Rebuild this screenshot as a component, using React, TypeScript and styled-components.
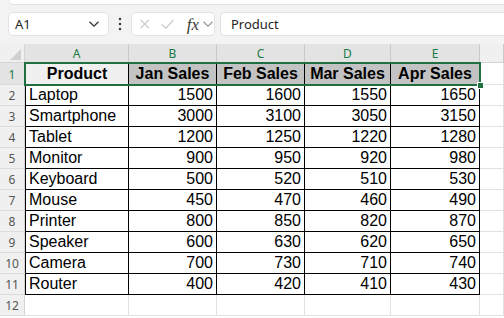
import React from "react";
import styled, { createGlobalStyle } from "styled-components";

const GlobalStyle = createGlobalStyle`
  html, body {
    margin: 0;
    padding: 0;
    background: #f3f3f3;
  }
`;

const COLS = [
  { key: "A", width: 104 },
  { key: "B", width: 88 },
  { key: "C", width: 88 },
  { key: "D", width: 86 },
  { key: "E", width: 89 },
];

const DATA: [string, number, number, number, number][] = [
  ["Laptop", 1500, 1600, 1550, 1650],
  ["Smartphone", 3000, 3100, 3050, 3150],
  ["Tablet", 1200, 1250, 1220, 1280],
  ["Monitor", 900, 950, 920, 980],
  ["Keyboard", 500, 520, 510, 530],
  ["Mouse", 450, 470, 460, 490],
  ["Printer", 800, 850, 820, 870],
  ["Speaker", 600, 630, 620, 650],
  ["Camera", 700, 730, 710, 740],
  ["Router", 400, 420, 410, 430],
];

const HEADERS = ["Product", "Jan Sales", "Feb Sales", "Mar Sales", "Apr Sales"];

const Window = styled.div`
  width: 504px;
  height: 318px;
  overflow: hidden;
  background: #f3f3f3;
  display: flex;
  flex-direction: column;
`;

const RibbonEdge = styled.div`
  height: 4px;
  margin-left: 10px;
  background: #ffffff;
  border-bottom-left-radius: 6px;
  box-shadow: 0 1px 1px rgba(0, 0, 0, 0.08);
`;

const FormulaRow = styled.div`
  display: flex;
  align-items: center;
  height: 24px;
  margin-top: 8px;
  padding-left: 8px;
`;

const Pill = styled.div<{ $w: number; $open?: boolean }>`
  box-sizing: border-box;
  width: ${(p) => p.$w}px;
  height: 24px;
  background: #ffffff;
  border: 1px solid #e3e3e3;
  border-radius: ${(p) => (p.$open ? "5px 0 0 5px" : "5px")};
  border-right: ${(p) => (p.$open ? "none" : "1px solid #e3e3e3")};
  display: flex;
  align-items: center;
  font-family: "Segoe UI", "Noto Sans", "DejaVu Sans", sans-serif;
  font-size: 13px;
  color: #242424;
`;

const NameText = styled.span`
  flex: 1;
  padding-left: 6px;
`;

const Dots = styled.div`
  width: 22px;
  display: flex;
  justify-content: center;
`;

const FxText = styled.span`
  font-family: "Liberation Serif", "DejaVu Serif", serif;
  font-style: italic;
  font-size: 17px;
  color: #3a3a3a;
  margin-left: 12px;
  line-height: 1;
`;

const FormulaText = styled.span`
  padding-left: 10px;
`;

const Sheet = styled.div`
  margin-top: 8px;
  flex: 1;
  background: #ffffff;
  position: relative;
`;

const GridRow = styled.div`
  display: flex;
`;

const Corner = styled.div`
  box-sizing: border-box;
  width: 25px;
  height: 19px;
  background: #f0f0f0;
  border-right: 1px solid #d4d4d4;
  border-bottom: 1px solid #d4d4d4;
  position: relative;
  overflow: hidden;
`;

const ColHead = styled.div<{ $w: number; $sel?: boolean }>`
  box-sizing: border-box;
  width: ${(p) => p.$w}px;
  flex: ${(p) => (p.$w ? "none" : "1")};
  height: 19px;
  background: ${(p) => (p.$sel ? "#e3e3e3" : "#f0f0f0")};
  border-right: 1px solid #c9c9c9;
  border-bottom: 1px solid ${(p) => (p.$sel ? "#1e6f42" : "#d4d4d4")};
  color: ${(p) => (p.$sel ? "#1a7a44" : "#555555")};
  font-family: "Segoe UI", "Noto Sans", "DejaVu Sans", sans-serif;
  font-size: 12px;
  display: flex;
  align-items: center;
  justify-content: center;
`;

const RowHead = styled.div<{ $h: number; $sel?: boolean }>`
  box-sizing: border-box;
  width: 25px;
  height: ${(p) => p.$h}px;
  background: ${(p) => (p.$sel ? "#e3e3e3" : "#f0f0f0")};
  border-right: 1px solid ${(p) => (p.$sel ? "#1e6f42" : "#d4d4d4")};
  border-bottom: 1px solid #dcdcdc;
  color: ${(p) => (p.$sel ? "#1a7a44" : "#555555")};
  font-family: "Segoe UI", "Noto Sans", "DejaVu Sans", sans-serif;
  font-size: 12px;
  display: flex;
  align-items: center;
  justify-content: center;
  padding-top: 1px;
`;

const Cell = styled.div<{
  $w: number;
  $h: number;
  $bg?: string;
  $right?: boolean;
  $bold?: boolean;
  $center?: boolean;
  $table?: boolean;
}>`
  box-sizing: border-box;
  width: ${(p) => p.$w}px;
  flex: ${(p) => (p.$w ? "none" : "1")};
  height: ${(p) => p.$h}px;
  background: ${(p) => p.$bg || "#ffffff"};
  border-right: 1px solid ${(p) => (p.$table ? "#000000" : "#e1e1e1")};
  border-bottom: 1px solid ${(p) => (p.$table ? "#000000" : "#e1e1e1")};
  font-family: "Liberation Sans", Arial, sans-serif;
  font-size: 16px;
  font-weight: ${(p) => (p.$bold ? 700 : 400)};
  color: #000000;
  display: flex;
  align-items: flex-end;
  justify-content: ${(p) => (p.$center ? "center" : p.$right ? "flex-end" : "flex-start")};
  padding: 0 3px 1px 3px;
  white-space: nowrap;
`;

const FirstCell = styled(Cell)`
  border-left: 1px solid #000000;
`;

const Selection = styled.div`
  position: absolute;
  box-sizing: border-box;
  left: 24px;
  top: 18px;
  width: 457px;
  height: 24px;
  border: 2px solid #1e6f42;
  pointer-events: none;
`;

const Handle = styled.div`
  position: absolute;
  box-sizing: border-box;
  left: 477px;
  top: 38px;
  width: 7px;
  height: 7px;
  background: #1e6f42;
  border: 1px solid #ffffff;
`;

const Chevron = ({ color = "#444" }: { color?: string }) => (
  <svg width="12" height="8" viewBox="0 0 12 8">
    <path d="M1.5 1.8 L6 6.2 L10.5 1.8" fill="none" stroke={color} strokeWidth="1.3" />
  </svg>
);

export default function App() {
  return (
    <>
      <GlobalStyle />
      <Window>
        <RibbonEdge />
        <FormulaRow>
          <Pill $w={101}>
            <NameText>A1</NameText>
            <span style={{ marginRight: 8, display: "flex" }}>
              <Chevron color="#333" />
            </span>
          </Pill>
          <Dots>
            <svg width="4" height="14" viewBox="0 0 4 14">
              <circle cx="2" cy="2" r="1.3" fill="#444" />
              <circle cx="2" cy="7" r="1.3" fill="#444" />
              <circle cx="2" cy="12" r="1.3" fill="#444" />
            </svg>
          </Dots>
          <Pill $w={84}>
            <svg width="16" height="16" viewBox="0 0 16 16" style={{ marginLeft: 6 }}>
              <path d="M3 3 L13 13 M13 3 L3 13" stroke="#c4c4c4" strokeWidth="1.3" fill="none" />
            </svg>
            <svg width="18" height="16" viewBox="0 0 18 16" style={{ marginLeft: 8 }}>
              <path d="M2 8.5 L7 13 L16 3" stroke="#c4c4c4" strokeWidth="1.3" fill="none" />
            </svg>
            <FxText>fx</FxText>
            <span style={{ marginLeft: 3, display: "flex" }}>
              <Chevron color="#9a9a9a" />
            </span>
          </Pill>
          <span style={{ width: 5 }} />
          <Pill $w={284} $open>
            <FormulaText>Product</FormulaText>
          </Pill>
        </FormulaRow>
        <Sheet>
          <GridRow>
            <Corner>
              <svg width="25" height="19" viewBox="0 0 25 19" style={{ position: "absolute", left: 0, top: 0 }}>
                <path d="M21 5 L21 16 L10 16 Z" fill="#d0d0d0" />
              </svg>
            </Corner>
            {COLS.map((c) => (
              <ColHead key={c.key} $w={c.width} $sel>
                {c.key}
              </ColHead>
            ))}
            <ColHead $w={0} />
          </GridRow>
          <GridRow>
            <RowHead $h={22} $sel>
              1
            </RowHead>
            {HEADERS.map((h, i) => {
              const C = i === 0 ? FirstCell : Cell;
              return (
                <C
                  key={h}
                  $w={COLS[i].width}
                  $h={22}
                  $bg={i === 0 ? "#f0f0f0" : "#c3c3c3"}
                  $bold
                  $center
                  $table
                >
                  {h}
                </C>
              );
            })}
            <Cell $w={0} $h={22} />
          </GridRow>
          {DATA.map((row, r) => (
            <GridRow key={row[0]}>
              <RowHead $h={21}>{r + 2}</RowHead>
              {row.map((v, i) => {
                const C = i === 0 ? FirstCell : Cell;
                return (
                  <C key={i} $w={COLS[i].width} $h={21} $right={i > 0} $table>
                    {v}
                  </C>
                );
              })}
              <Cell $w={0} $h={21} />
            </GridRow>
          ))}
          <GridRow>
            <RowHead $h={21}>12</RowHead>
            {COLS.map((c) => (
              <Cell key={c.key} $w={c.width} $h={21} />
            ))}
            <Cell $w={0} $h={21} />
          </GridRow>
          <Selection />
          <Handle />
        </Sheet>
      </Window>
    </>
  );
}
